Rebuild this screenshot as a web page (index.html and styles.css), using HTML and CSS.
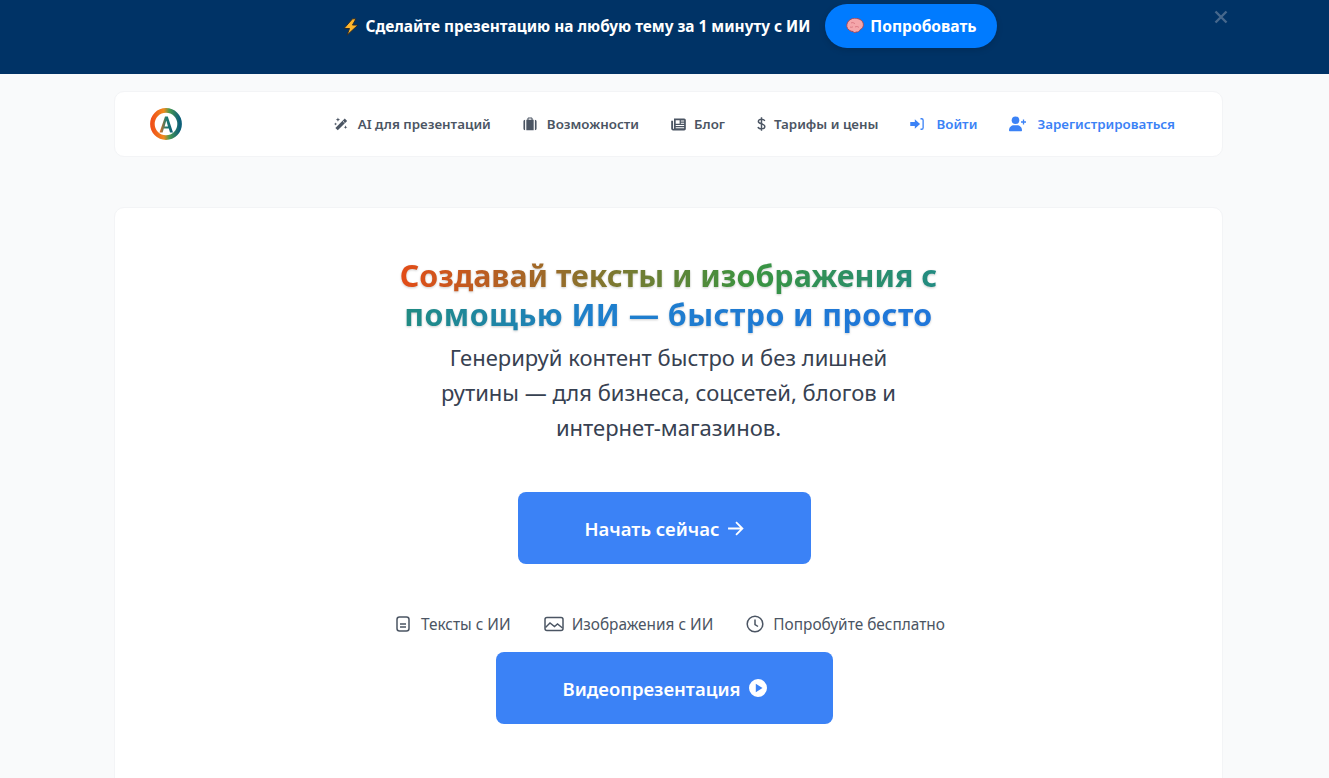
FILE: index.html
```html
<!DOCTYPE html>
<html lang="ru">
<head>
<meta charset="utf-8">
<title>Создавай тексты и изображения</title>
<link rel="stylesheet" href="styles.css">
</head>
<body>
<div class="promo">
  <svg class="promo-bolt" viewBox="0 0 16 18"><path d="M9.500.8 1 10.500h5.500L4 17.200 15 7H9.500L13 .8z" fill="#fdb52b" stroke="#2b2b2b" stroke-width="1" stroke-linejoin="round"/></svg>
  <span class="promo-text">Сделайте презентацию на любую тему за 1 минуту с ИИ</span>
  <a class="promo-btn"><svg class="promo-brain" viewBox="0 0 18 16"><path d="M5 1.200C7-.1 10-.1 12 .7c2.500.5 5 2.500 5.300 5 .5 2.500-.8 5-3 5.800-.8 1.800-2.800 3-4.300 2.500-1.200 1-2.500.5-3-.5C4.500 13.500 1.300 11.500.8 8.500.3 5.500 2.500 2.200 5 1.200z" fill="#f4a6aa" stroke="#a8434f" stroke-width=".9"/><path d="M5 5c1.500-1 3 0 4 .8M9 9c1.500-.8 3-.5 4 .5M4 9c1 .5 2 .3 3-.3" fill="none" stroke="#d8757f" stroke-width=".9"/></svg>Попробовать</a>
  <svg class="promo-close" viewBox="0 0 14 14"><path d="M1.500 1.500l11 11M12.500 1.500l-11 11" stroke="#46688c" stroke-width="2.400" fill="none"/></svg>
</div>
<div class="wrap">
  <nav class="nav">
    <svg class="logo" viewBox="0 0 32 32">
      <defs>
        <linearGradient id="ring" x1="0" y1="0" x2="1" y2="0"><stop offset="0" stop-color="#f0521a"/><stop offset=".42" stop-color="#f08a1c"/><stop offset=".62" stop-color="#4a9a50"/><stop offset="1" stop-color="#0d5f78"/></linearGradient>
        <linearGradient id="letter" x1="0" y1="0" x2="1" y2="0"><stop offset="0" stop-color="#ef6a1c"/><stop offset=".5" stop-color="#1c7c70"/><stop offset="1" stop-color="#0d5a78"/></linearGradient>
      </defs>
      <circle cx="16" cy="16" r="13.600" fill="none" stroke="url(#ring)" stroke-width="4.600"/>
      <path fill-rule="evenodd" d="M9.500 24.500 15 8.500h2.800l5.200 16h-3l-1.200-4h-5l-1.200 4zM14.600 18.500h3.400L16.300 12.500z" fill="url(#letter)"/>
    </svg>
    <ul class="menu">
      <li class="item"><svg class="ico" viewBox="0 0 16 16"><path d="M12.300 1.800 15 4.500 4.300 15.200 1.600 12.500z" fill="#4b5563"/><path d="M10.300 4.900l1.700 1.700" stroke="#fff" stroke-width="1"/><path d="M4.500.5l.7 1.800L7 3l-1.800.7L4.500 5.500l-.7-1.800L2 3l1.800-.7zM1.800 6.200l.5 1.300 1.300.5-1.300.5-.5 1.300-.5-1.300L0 8l1.300-.5zM13.200 9.500l.6 1.500 1.500.6-1.500.6-.6 1.500-.6-1.500-1.500-.6 1.500-.6z" fill="#4b5563"/></svg>AI для презентаций</li>
      <li class="item"><svg class="ico" viewBox="0 0 16 16"><path d="M5 3V2c0-.8.700-1.500 1.500-1.500h3C10.300.5 11 1.200 11 2v1H9.700V1.800H6.300V3zM.5 5.200C.5 4 1.300 3.200 2.400 3.200V15C1.300 15 .5 14.200.5 13zM3.800 3.200h8.400V15H3.800zM13.600 3.200c1.100 0 1.900.8 1.900 2V13c0 1.200-.8 2-1.900 2z" fill="#4b5563"/></svg>Возможности</li>
      <li class="item item-blog"><svg class="ico" viewBox="0 0 16 16"><path fill-rule="evenodd" d="M3.200 1.500h10.900c.9 0 1.700.8 1.700 1.700v9.300c0 1-.8 1.800-1.700 1.800H2.200C1 14.300.2 13.500.2 12.300V4h2V12.300c0 .3.200.5.500.5s.5-.2.500-.5zM5 3.500v3.600h4.200V3.500zM10.500 3.800v1.100h3.500V3.800zM10.500 6.100v1.100h3.500V6.100zM5 8.500v1.200h9V8.500zM5 10.800V12h9v-1.200z" fill="#4b5563"/></svg>Блог</li>
      <li class="item"><svg class="ico ico-dollar" viewBox="0 0 10 16"><path d="M8.600 4.600C8.200 3.400 6.900 2.700 5 2.700c-2.100 0-3.500.9-3.500 2.400C1.500 8.400 8.700 7 8.700 10.700c0 1.700-1.500 2.700-3.700 2.700-2.100 0-3.500-.7-3.900-2.100M5 .4v15.200" fill="none" stroke="#4b5563" stroke-width="1.600"/></svg>Тарифы и цены</li>
      <li class="item item-blue"><svg class="ico ico-login" viewBox="0 0 16 16"><path d="M5.500 2.500 11.500 8l-6 5.500V10.300H.3V5.700h5.200z" fill="#3b82f6"/><path d="M12 2h1.200c1 0 1.800.8 1.800 1.800v8.400c0 1-.8 1.800-1.800 1.800H12" fill="none" stroke="#3b82f6" stroke-width="1.500"/></svg>Войти</li>
      <li class="item item-blue"><svg class="ico ico-user" viewBox="0 0 18 16"><circle cx="6.500" cy="4.200" r="3.800" fill="#3b82f6"/><path d="M0 14.200c0-3 2.300-5 5-5h3c2.700 0 5 2 5 5 0 .6-.4 1-1 1H1c-.6 0-1-.4-1-1z" fill="#3b82f6"/><path d="M14.500 3.500v5M12 6h5" stroke="#3b82f6" stroke-width="1.300"/></svg>Зарегистрироваться</li>
    </ul>
  </nav>
  <main class="card">
    <h1 class="title"><span class="title-grad">Создавай тексты и изображения с <span class="title-line2">помощью ИИ — быстро и просто</span></span></h1>
    <p class="lead">Генерируй контент быстро и без лишней рутины — для бизнеса, соцсетей, блогов и интернет-магазинов.</p>
    <a class="btn btn-start">Начать сейчас<svg class="btn-arrow" viewBox="0 0 16 16"><path d="M1 8h13.500M8.500 2 14.500 8 8.500 14" fill="none" stroke="#fff" stroke-width="1.700"/></svg></a>
    <ul class="features">
      <li class="feature"><svg class="fico fico-doc" viewBox="0 0 14 16"><rect x="1" y="1" width="12" height="14" rx="2.500" fill="none" stroke="#4b5563" stroke-width="1.500"/><path d="M4 8h6M4 11h6" stroke="#4b5563" stroke-width="1.300"/></svg>Тексты с ИИ</li>
      <li class="feature"><svg class="fico fico-img" viewBox="0 0 20 16"><rect x="1" y="1.500" width="18" height="13" rx="2" fill="none" stroke="#4b5563" stroke-width="1.500"/><path d="M1.500 11.500 6 7l4.500 3.500L13.500 8l5 4" fill="none" stroke="#4b5563" stroke-width="1.400"/></svg>Изображения с ИИ</li>
      <li class="feature"><svg class="fico fico-clock" viewBox="0 0 18 18"><circle cx="9" cy="9" r="7.800" fill="none" stroke="#4b5563" stroke-width="1.500"/><path d="M9 4.500V9.500l3 2" fill="none" stroke="#4b5563" stroke-width="1.500"/></svg>Попробуйте бесплатно</li>
    </ul>
    <a class="btn btn-video">Видеопрезентация<svg class="btn-play" viewBox="0 0 18 18"><path fill-rule="evenodd" d="M9 0a9 9 0 1 1 0 18A9 9 0 0 1 9 0zM6.800 4.800v8.400L13.500 9z" fill="#fff"/></svg></a>
  </main>
</div>
</body>
</html>
```
FILE: styles.css
```css
* { box-sizing: border-box; }
html, body { margin: 0; padding: 0; height: 778px; overflow: hidden; }
body { background: #f9fafb; font-family: "Noto Sans", sans-serif; color: #374151; }
ul { list-style: none; margin: 0; padding: 0; }

.promo { position: relative; height: 74px; background: #003366; display: flex; justify-content: center; align-items: flex-start; padding: 4px 0 0 11px; }
.promo-bolt { width: 16px; height: 18px; margin: 14px 7px 0 0; flex: none; }
.promo-text { color: #fff; font-weight: 700; font-size: 15.4px; line-height: 20px; margin-top: 13px; white-space: nowrap; }
.promo-btn { display: flex; align-items: center; justify-content: center; margin-left: 15px; width: 172px; height: 44px; border-radius: 22px; background: #007bff; color: #fff; font-weight: 700; font-size: 15.6px; box-shadow: 0 2px 6px rgba(0,0,0,.15); }
.promo-brain { width: 18px; height: 16px; margin-right: 6px; }
.promo-close { position: absolute; left: 1214px; top: 10px; width: 14px; height: 14px; }

.wrap { width: 1109px; margin: 17px 0 0 114px; }
.nav { height: 66px; background: #fff; border: 1px solid #f3f4f6; border-radius: 10px; display: flex; align-items: center; justify-content: space-between; padding: 0 47px 0 35px; }
.logo { width: 32px; height: 32px; flex: none; }
.menu { display: flex; align-items: center; gap: 32px; }
.item { display: flex; align-items: center; font-size: 13.35px; font-weight: 600; color: #4b5563; white-space: nowrap; }
.item-blue { color: #3b82f6; }
.ico { width: 14px; height: 14px; margin-right: 10px; flex: none; }
.item-blog .ico { width: 15px; height: 15px; margin-right: 8px; }
.ico-dollar { width: 9px; height: 16px; margin-right: 8px; }
.ico-login { margin-right: 12px; }
.ico-user { width: 18px; height: 16px; margin-right: 10px; }

.card { height: 640px; margin-top: 50px; background: #fff; border: 1px solid #f3f4f6; border-radius: 10px; display: flex; flex-direction: column; align-items: center; padding-top: 48px; }
.title { width: 560px; margin: 0; text-align: center; font-size: 30.4px; line-height: 39px; font-weight: 700; filter: drop-shadow(0 1px 1px rgba(0,0,0,.2)); }
.title-grad { background: linear-gradient(90deg, #e34c17 0%, #3a9440 33%, #1f8a88 52%, #1e7fcc 68%, #1f76da 100%); -webkit-background-clip: text; background-clip: text; color: transparent; }
.title-line2 { letter-spacing: .43px; }
.lead { width: 470px; margin: 6px 0 0; text-align: center; font-size: 22px; line-height: 35px; color: #374151; }
.btn { display: flex; align-items: center; justify-content: center; height: 72px; background: #3b82f6; color: #fff; font-weight: 600; font-size: 18.5px; border-radius: 8px; margin-right: 8px; }
.btn-start { width: 293px; margin-top: 47px; }
.btn-video { width: 337px; margin-top: 17px; }
.btn-arrow { width: 17px; height: 17px; margin-left: 8px; }
.btn-play { width: 18px; height: 18px; margin-left: 8px; }
.features { display: flex; align-items: center; gap: 33px; margin: 49px 0 0 4px; height: 22px; }
.feature { display: flex; align-items: center; font-size: 15.4px; color: #4b5563; white-space: nowrap; }
.fico { margin-right: 10px; flex: none; }
.fico-doc { width: 14px; height: 16px; margin-right: 11px; }
.fico-img { width: 20px; height: 16px; margin-right: 8px; }
.fico-clock { width: 18px; height: 18px; margin-right: 9px; }
```
